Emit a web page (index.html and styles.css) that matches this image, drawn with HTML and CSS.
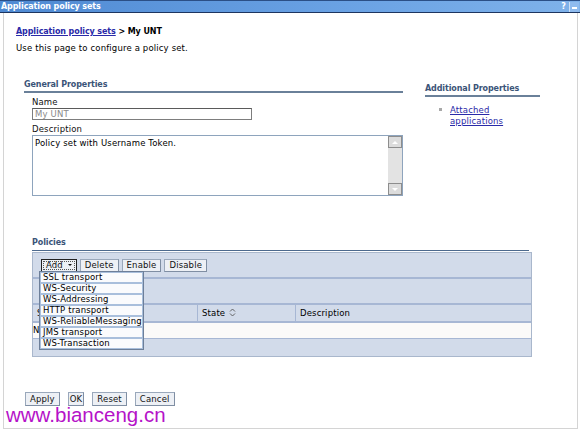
FILE: index.html
```html
<!DOCTYPE html>
<html>
<head>
<meta charset="utf-8">
<link rel="stylesheet" href="styles.css">
</head>
<body>
<div class="titlebar">
  <span class="title">Application policy sets</span>
  <span class="tb-icons"><span class="help">?</span><span class="mini"><span class="dash"></span></span></span>
</div>
<div class="frame">
  <div class="crumb"><a href="#">Application policy sets</a> &gt; My UNT</div>
  <div class="intro">Use this page to configure a policy set.</div>

  <div class="columns">
    <div class="left">
      <div class="sec-head">General Properties</div>
      <div class="field">
        <div class="label">Name</div>
        <div class="input">My UNT</div>
      </div>
      <div class="field">
        <div class="label">Description</div>
        <div class="textarea">
          <div class="ta-text">Policy set with Username Token.</div>
          <div class="sb">
            <div class="sb-btn"><span class="arr up"></span></div>
            <div class="sb-track"></div>
            <div class="sb-btn"><span class="arr down"></span></div>
          </div>
        </div>
      </div>
    </div>
    <div class="right">
      <div class="sec-head add-head">Additional Properties</div>
      <ul class="links">
        <li><a href="#">Attached applications</a></li>
      </ul>
    </div>
  </div>

  <div class="policies">
    <div class="sec-head pol-head">Policies</div>
    <div class="box">
      <div class="toolbar">
        <span class="btn add">Add <span class="caret"></span></span>
        <span class="btn">Delete</span>
        <span class="btn">Enable</span>
        <span class="btn">Disable</span>
      </div>
      <div class="band"></div>
      <div class="hdr">
        <div class="cell">Select</div>
        <div class="cell">State <span class="sort"><svg width="7" height="9" viewBox="0 0 7 9"><path d="M1 3.5 L3.5 1 L6 3.5 M1 5.5 L3.5 8 L6 5.5" fill="none" stroke="#555" stroke-width="0.9"/></svg></span></div>
        <div class="cell">Description</div>
      </div>
      <div class="row-white"><div class="cell">None</div></div>
      <div class="band2"></div>
      <div class="menu">
        <div class="mi">SSL transport</div>
        <div class="mi">WS-Security</div>
        <div class="mi">WS-Addressing</div>
        <div class="mi">HTTP transport</div>
        <div class="mi">WS-ReliableMessaging</div>
        <div class="mi">JMS transport</div>
        <div class="mi">WS-Transaction</div>
      </div>
    </div>
  </div>

  <div class="actions">
    <span class="btn">Apply</span>
    <span class="btn ok">OK</span>
    <span class="btn">Reset</span>
    <span class="btn">Cancel</span>
  </div>
  <div class="watermark">www.bianceng.cn</div>
</div>
</body>
</html>
```
FILE: styles.css
```css
html, body {
  margin: 0;
  padding: 0;
  background: #fff;
  width: 580px;
  height: 430px;
  overflow: hidden;
  font-family: "DejaVu Sans", Verdana, sans-serif;
  font-size: 8.5px;
  letter-spacing: 0.15px;
  color: #000;
}
.titlebar {
  height: 11px;
  border-top: 1px solid #2b4f86;
  border-bottom: 1px solid #1d3560;
  background: linear-gradient(to right, #4f8ad3, #6aa2e4 60%, #7fb2ea);
  display: flex;
  align-items: center;
  justify-content: space-between;
  padding-left: 1px;
}
.title {
  color: #fff;
  font-weight: bold;
  font-size: 8px;
  letter-spacing: -0.1px;
  line-height: 11px;
}
.tb-icons {
  display: flex;
  align-items: center;
  gap: 3px;
  padding-right: 1px;
}
.help {
  color: #fff;
  font-weight: bold;
  font-size: 8px;
  line-height: 10px;
}
.mini {
  width: 9px;
  height: 10px;
  background: #8fbbee;
  border-left: 1px solid #c9def5;
  display: flex;
  align-items: flex-end;
  justify-content: center;
}
.dash {
  width: 5px;
  height: 2px;
  background: #fff;
  margin-bottom: 3px;
}
.frame {
  position: relative;
  margin-left: 3px;
  width: 573px;
  height: 402px;
  border-left: 1px solid #d4d4d4;
  border-right: 1px solid #d4d4d4;
  border-bottom: 1px solid #d4d4d4;
  padding-top: 13px;
}
.crumb {
  margin-left: 12px;
  font-weight: bold;
  font-size: 8px;
  letter-spacing: -0.1px;
  line-height: 11px;
}
a {
  color: #2a2aa8;
  text-decoration: underline;
}
.intro {
  margin-left: 12px;
  margin-top: 6px;
  line-height: 11px;
}
.columns {
  display: flex;
  margin-top: 26px;
  margin-left: 20px;
}
.left {
  width: 379px;
}
.right {
  margin-left: 22px;
  margin-top: 4px;
  width: 115px;
}
.sec-head {
  color: #3b5478;
  font-weight: bold;
  font-size: 8px;
  letter-spacing: -0.1px;
  line-height: 10px;
  border-bottom: 2px solid #6a8099;
  padding-bottom: 1px;
}
.field {
  margin-left: 8px;
  margin-top: 4px;
}
.field + .field {
  margin-top: 4px;
}
.label {
  line-height: 10px;
  color: #111;
}
.input {
  width: 216px;
  height: 10px;
  border: 1px solid #7d7d7d;
  border-top-color: #5a5a5a;
  color: #8a8a8a;
  line-height: 10px;
  padding-left: 2px;
  margin-top: 1px;
}
.textarea {
  width: 369px;
  height: 59px;
  border: 1px solid #8ea4bd;
  margin-top: 1px;
  display: flex;
}
.ta-text {
  flex: 1;
  padding: 2px 2px;
  line-height: 10px;
}
.sb {
  width: 14px;
  display: flex;
  flex-direction: column;
  background: #e3e3e3;
}
.sb-btn {
  height: 12px;
  box-sizing: border-box;
  border: 1px solid #8d8d8d;
  background: #dcdcdc;
  display: flex;
  align-items: center;
  justify-content: center;
}
.sb-track {
  flex: 1;
}
.arr {
  width: 0;
  height: 0;
  border-left: 3px solid transparent;
  border-right: 3px solid transparent;
}
.arr.up { border-bottom: 3px solid #fff; }
.arr.down { border-top: 3px solid #fff; }
.links {
  list-style: none;
  margin: 8px 0 0 14px;
  padding: 0;
}
.links li {
  position: relative;
  padding-left: 11px;
  line-height: 11px;
}
.links li::before {
  content: "";
  position: absolute;
  left: 0;
  top: 3px;
  width: 3px;
  height: 3px;
  background: #a8a8a8;
}
.policies {
  margin-left: 28px;
  margin-top: 42px;
  width: 500px;
}
.pol-head {
  width: 497px;
  border-bottom-color: #4d6a8e;
  border-bottom-width: 1px;
  padding-bottom: 2px;
}
.box {
  position: relative;
  margin-top: 1px;
  border: 1px solid #a9b7cc;
  background: #d2dbea;
}
.toolbar {
  display: flex;
  gap: 3px;
  padding: 6px 0 5px 8px;
  border-bottom: 2px solid #a7b7d4;
}
.btn {
  display: inline-block;
  background: #edf0f5;
  border: 1px solid #9aa8bb;
  border-right-color: #7f8ea3;
  border-bottom-color: #7f8ea3;
  line-height: 9px;
  padding: 1px 4px;
  color: #111;
}
.btn.add {
  border: 1px solid #222;
  outline: 1px dotted #555;
  outline-offset: -3px;
  padding: 1px 4px;
  margin-right: 0;
}
.caret {
  display: inline-block;
  width: 0;
  height: 0;
  border-left: 2px solid transparent;
  border-right: 2px solid transparent;
  border-top: 2px solid #111;
  vertical-align: 2px;
  margin-left: 2px;
}
.band {
  height: 24px;
  border-bottom: 2px solid #a7b7d4;
}
.hdr {
  display: grid;
  grid-template-columns: 164px 98px 1fr;
  height: 16px;
  border-bottom: 2px solid #a7b7d4;
}
.hdr .cell {
  line-height: 16px;
  padding-left: 4px;
}
.hdr .cell + .cell {
  border-left: 1px solid #a7b7d4;
}
.sort svg {
  vertical-align: -1px;
  margin-left: 1px;
}
.row-white {
  height: 15px;
  background: #fbfaf9;
  border-bottom: 1px solid #a7b7d4;
}
.row-white .cell {
  line-height: 15px;
  padding-left: 0;
}
.band2 {
  height: 17px;
}
.menu {
  position: absolute;
  left: 6px;
  top: 18px;
  width: 103px;
  border: 1px solid #6d7f99;
  background: #fff;
}
.mi {
  height: 9px;
  line-height: 9px;
  padding-left: 2px;
  border: 1px solid #a9bfdc;
  background: #fafbfd;
  white-space: nowrap;
}
.actions {
  display: flex;
  gap: 8px;
  margin-left: 21px;
  margin-top: 35px;
}
.actions .btn {
  padding: 1px 4px;
  line-height: 10px;
}
.actions .btn.ok {
  padding: 1px 1px;
}
.watermark {
  position: absolute;
  left: 2px;
  top: 393px;
  font-family: "Liberation Sans", Arial, sans-serif;
  font-size: 20.5px;
  letter-spacing: 0;
  color: #b512c8;
  line-height: 17px;
}
```
